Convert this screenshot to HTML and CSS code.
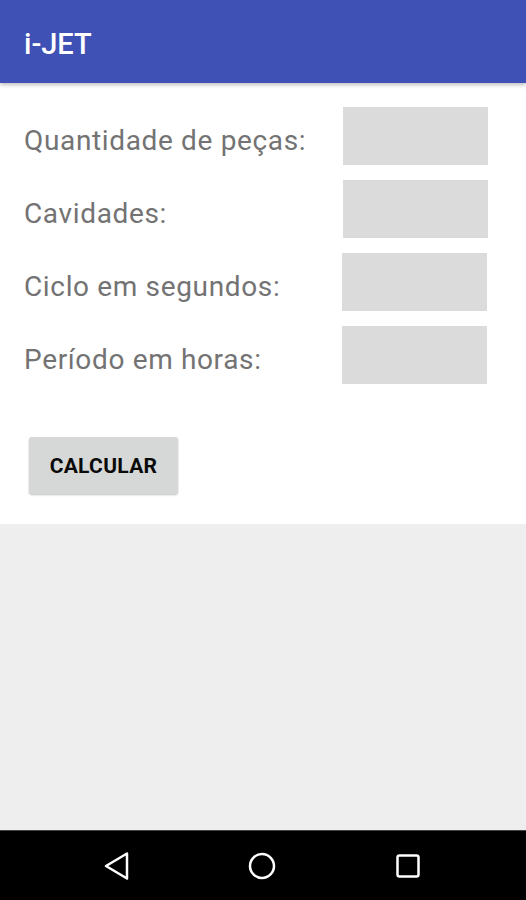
FILE: index.html
```html
<!DOCTYPE html>
<html lang="pt">
<head>
  <meta charset="UTF-8">
  <meta name="viewport" content="width=device-width, initial-scale=1.0">
  <title>i-JET</title>
  <link rel="stylesheet" href="styles.css">
</head>
<body>
  <div class="screen">
    <header class="appbar">i-JET</header>

    <main class="content">
      <form class="calc">
        <div class="row">
          <label for="pecas">Quantidade de peças:</label>
          <input id="pecas" type="text">
        </div>
        <div class="row">
          <label for="cavidades">Cavidades:</label>
          <input id="cavidades" type="text">
        </div>
        <div class="row shift">
          <label for="ciclo">Ciclo em segundos:</label>
          <input id="ciclo" type="text">
        </div>
        <div class="row shift">
          <label for="periodo">Período em horas:</label>
          <input id="periodo" type="text">
        </div>
        <button type="button" class="btn">CALCULAR</button>
      </form>
    </main>

    <div class="empty"></div>

    <nav class="navbar">
      <svg width="28" height="30" viewBox="0 0 28 30">
        <path d="M25 2.5 L4 15 L25 27.5 Z" fill="none" stroke="#fff" stroke-width="2.5" stroke-linejoin="round"/>
      </svg>
      <svg width="30" height="30" viewBox="0 0 30 30">
        <circle cx="15" cy="15" r="12" fill="none" stroke="#fff" stroke-width="2.5"/>
      </svg>
      <svg width="28" height="28" viewBox="0 0 28 28">
        <rect x="3.5" y="3.5" width="21" height="21" rx="2" fill="none" stroke="#fff" stroke-width="2.5"/>
      </svg>
    </nav>
  </div>
</body>
</html>
```

FILE: styles.css
```css
* {
  box-sizing: border-box;
}

body {
  margin: 0;
  font-family: Roboto, "Liberation Sans", sans-serif;
}

.screen {
  height: 900px;
  display: flex;
  flex-direction: column;
  background-color: #eeeeee;
}

.appbar {
  height: 83px;
  background-color: #3f51b5;
  color: white;
  font-size: 29px;
  font-weight: 500;
  padding: 4px 24px 0;
  display: flex;
  align-items: center;
  position: relative;
  z-index: 1;
  box-shadow: 0 2px 4px rgba(0, 0, 0, 0.25);
}

.content {
  background-color: white;
  padding: 24px 38px 30px 24px;
}

.row {
  display: flex;
  align-items: center;
  justify-content: space-between;
  height: 58px;
  margin-bottom: 15px;
}

.row.shift {
  margin-right: 1px;
}

.row label {
  font-size: 28px;
  letter-spacing: 0.65px;
  color: #737373;
  padding-top: 9px;
}

.row input {
  width: 145px;
  height: 58px;
  border: none;
  background-color: #dcdbdb;
  outline: none;
}

.btn {
  margin-top: 38px;
  margin-left: 5px;
  width: 149px;
  height: 57px;
  border: none;
  border-radius: 3px;
  background-color: #d6d7d7;
  box-shadow: 0 1px 2px rgba(0, 0, 0, 0.25);
  font-family: Roboto, "Liberation Sans", sans-serif;
  font-size: 21px;
  font-weight: 700;
  letter-spacing: 0.3px;
  color: #0a0a0a;
}

.empty {
  flex: 1;
}

.navbar {
  height: 70px;
  background-color: black;
  border-top: 1px solid #444;
  display: flex;
  align-items: center;
  justify-content: center;
  gap: 117px;
  padding: 0 3px 0 0;
}
```
